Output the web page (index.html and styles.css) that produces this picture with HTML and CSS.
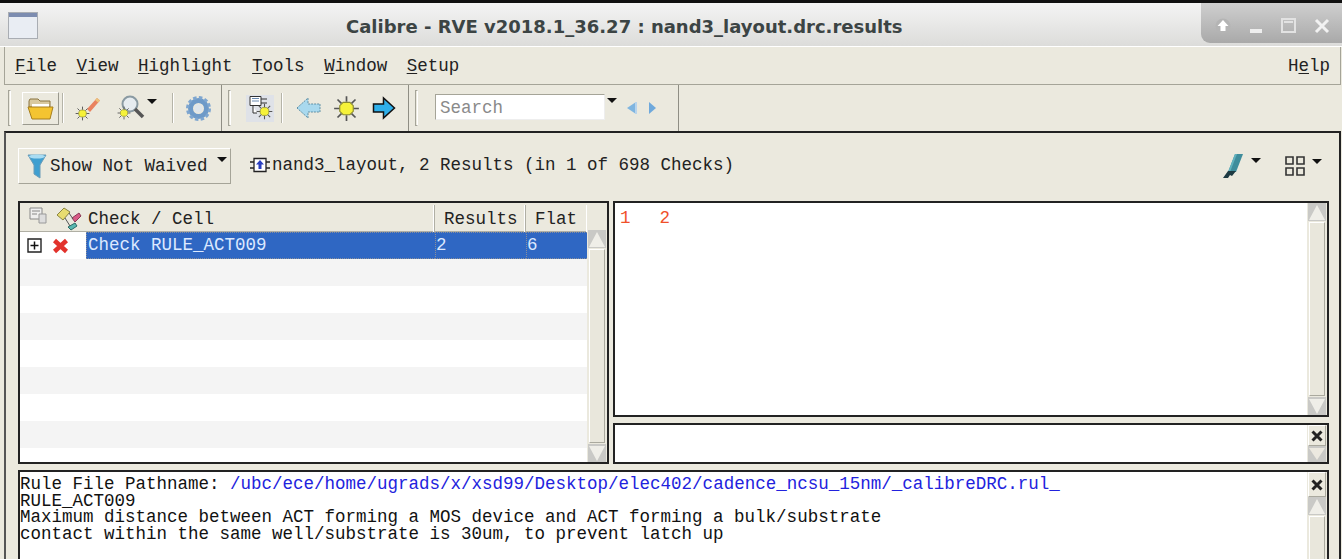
FILE: index.html
```html
<!DOCTYPE html>
<html lang="en">
<head>
    <meta charset="UTF-8">
    <title>Calibre - RVE v2018.1_36.27 : nand3_layout.drc.results</title>
    <link rel="stylesheet" href="styles.css">
</head>
<body>
    <svg class="defs" width="0" height="0">
        <symbol id="spark" viewBox="0 0 24 24">
            <path d="M12 1v5M12 18v5M1 12h5M18 12h5M4 4l3.500 3.500M20 4l-3.500 3.500M4 20l3.500-3.500M20 20l-3.500-3.500" stroke="#555" stroke-width="1.500" fill="none"/>
            <path d="M9 6.500h6l3 3v5l-3 3H9l-3-3v-5z" fill="#f6f23a" stroke="#8a8a30"/>
        </symbol>
        <symbol id="close-x" viewBox="0 0 14 14">
            <path d="M2.500 2.500l9 9M11.500 2.500l-9 9" stroke="#222" stroke-width="3"/>
        </symbol>
    </svg>

    <div class="titlebar">
        <svg class="app-icon" width="30" height="27" viewBox="0 0 30 27">
            <rect x="0.500" y="0.500" width="29" height="26" fill="#e9edf3" stroke="#a9adb3"/>
            <rect x="1" y="1" width="28" height="4" fill="#7c8cb0"/>
        </svg>
        <div class="title">Calibre - RVE v2018.1_36.27 : nand3_layout.drc.results</div>
        <div class="win-buttons">
            <svg width="18" height="18" viewBox="0 0 18 18"><circle cx="9" cy="9" r="7.500" fill="#b4b4b4"/><path d="M9 3l5.500 6h-3v5h-5V9h-3z" fill="#fff"/></svg>
            <svg width="18" height="18" viewBox="0 0 18 18"><rect x="3" y="12" width="12" height="4" fill="#eee"/></svg>
            <svg width="18" height="18" viewBox="0 0 18 18"><rect x="2" y="2" width="13" height="13" fill="none" stroke="#e2e2e2" stroke-width="2"/><rect x="4" y="4" width="9" height="2" fill="#e2e2e2"/></svg>
            <svg width="18" height="18" viewBox="0 0 18 18"><path d="M3 3l12 12M15 3L3 15" stroke="#f2f2f2" stroke-width="3"/></svg>
        </div>
    </div>

    <div class="menubar">
        <span><u>F</u>ile</span>
        <span><u>V</u>iew</span>
        <span><u>H</u>ighlight</span>
        <span><u>T</u>ools</span>
        <span><u>W</u>indow</span>
        <span><u>S</u>etup</span>
        <span class="menu-help">H<u>e</u>lp</span>
    </div>

    <div class="toolbar">
        <div class="tool-group group-file">
            <i class="handle"></i>
            <div class="tool-btn raised">
                <svg width="27" height="25" viewBox="0 0 27 25">
                    <path d="M2 5l1-2h8l2 2h10v6H2z" fill="#d9c9a0" stroke="#8a7440"/>
                    <path d="M5 8h17v3H5z" fill="#fff"/>
                    <path d="M1 11h25l-3 12H5z" fill="#f4c431" stroke="#a87f1c"/>
                </svg>
            </div>
            <i class="sep sep-a"></i>
            <svg class="tool-icon pen-spark" width="26" height="26" viewBox="0 0 26 26">
                <path d="M12 14L22 3l3 2.500L15 17z" fill="#e9825e"/>
                <path d="M20 5l2-2 3 2.500-2 2z" fill="#ecc27c"/>
                <use href="#spark" x="0" y="11" width="15" height="15"/>
            </svg>
            <svg class="tool-icon zoom-spark" width="28" height="26" viewBox="0 0 28 26">
                <circle cx="13" cy="9" r="7.500" fill="#e6ecf0" stroke="#8a9aa2" stroke-width="2"/>
                <path d="M18 14l8 8" stroke="#555" stroke-width="3.500"/>
                <use href="#spark" x="0" y="11" width="14" height="14"/>
            </svg>
            <i class="drop"></i>
            <i class="sep sep-b"></i>
            <svg class="tool-icon gear" width="25" height="25" viewBox="0 0 25 25">
                <circle cx="12.500" cy="12.500" r="8" fill="none" stroke="#6e9ac8" stroke-width="5"/>
                <circle cx="12.500" cy="12.500" r="11" fill="none" stroke="#7ea6d0" stroke-width="3" stroke-dasharray="3.500 2.260"/>
                <circle cx="12.500" cy="12.500" r="4" fill="#dfe6ec"/>
            </svg>
        </div>
        <div class="tool-group group-nav">
            <i class="handle"></i>
            <div class="tool-btn pressed">
                <svg width="27" height="26" viewBox="0 0 27 26">
                    <path d="M3 1.500h11v9H3zM14 4h6M14 8h6M6 10.500V18h4" fill="#fff" stroke="#333"/>
                    <path d="M5 3.500h7M5 6h7" stroke="#6a8ab0"/>
                    <use href="#spark" x="9" y="8" width="17" height="17"/>
                </svg>
            </div>
            <i class="sep sep-c"></i>
            <svg class="tool-icon arrow-prev" width="25" height="24" viewBox="0 0 25 24">
                <path d="M1 12L12 2v6h12v8H12v6z" fill="#a9d9ee" stroke="#5f8fa5" stroke-dasharray="2 1"/>
            </svg>
            <svg class="tool-icon sun" width="27" height="27" viewBox="0 0 24 24"><use href="#spark"/></svg>
            <svg class="tool-icon arrow-next" width="24" height="24" viewBox="0 0 23 24">
                <path d="M22 12L11 2v6H1v8h10v6z" fill="#2fb0ea" stroke="#111" stroke-width="1.500"/>
            </svg>
        </div>
        <div class="tool-group group-search">
            <i class="handle"></i>
            <div class="search-box">Search</div>
            <i class="drop drop-search"></i>
            <svg class="tool-icon prev-small" width="11" height="14" viewBox="0 0 11 14"><path d="M10 1v12L1 7z" fill="#7fb5e0"/><path d="M10 1v12" stroke="#b8d4ec" stroke-width="2"/></svg>
            <svg class="tool-icon next-small" width="9" height="14" viewBox="0 0 9 14"><path d="M1 1v12l7-6z" fill="#6fa9dc"/></svg>
        </div>
    </div>

    <div class="main">
        <div class="filter-bar">
            <div class="filter-btn">
                <svg width="20" height="26" viewBox="0 0 20 26">
                    <path d="M1 2h18l-6 10v13l-6-4V12z" fill="#3f9fd0" stroke="#6a9cb8"/>
                    <ellipse cx="10" cy="3.500" rx="8" ry="2" fill="#a9dcf2"/>
                </svg>
                <span>Show Not Waived</span>
                <i class="drop drop-filter"></i>
            </div>
            <svg class="cell-icon" width="20" height="18" viewBox="0 0 20 18">
                <path d="M4 2.500h12v13H4zM0 6h4M0 12h4M16 6h4M16 12h4" fill="#fff" stroke="#222" stroke-width="1.300"/>
                <path d="M10 4l4 4.500h-2.500V13h-3V8.500H6z" fill="#2a3fc0"/>
            </svg>
            <span class="summary">nand3_layout, 2 Results (in 1 of 698 Checks)</span>
            <svg class="pen-icon" width="20" height="24" viewBox="0 0 20 24">
                <path d="M12 0h8l-7 18H5z" fill="#3f8d9c"/>
                <path d="M12 0h2L7 18H5z" fill="#62b2be"/>
                <path d="M5 17l-5 7h5l2-3 2 1 4-5z" fill="#1d3a42"/>
            </svg>
            <i class="drop drop-pen"></i>
            <svg class="grid-icon" width="20" height="20" viewBox="0 0 20 20">
                <path d="M1 1h7v7H1zM12 1h7v7h-7zM1 12h7v7H1zM12 12h7v7h-7z" fill="none" stroke="#333" stroke-width="1.600"/>
            </svg>
            <i class="drop drop-grid"></i>
        </div>

        <div class="panes">
            <div class="pane check-pane">
                <div class="check-table">
                    <div class="check-row check-head">
                        <div class="head-cell head-first">
                            <svg class="head-a" width="20" height="18" viewBox="0 0 20 18">
                                <path d="M1 1h12v11H1z" fill="#eee" stroke="#888"/>
                                <path d="M3 4h8M3 7h5" stroke="#888"/>
                                <path d="M10 7h7v9h-7z" fill="#ddd" stroke="#999"/>
                            </svg>
                            <svg class="head-b" width="26" height="24" viewBox="0 0 26 24">
                                <path d="M1 8l7-7 6 4-7 8z" fill="#e8dc70" stroke="#8a8440"/>
                                <path d="M16 11l7-5 2 3-6 6z" fill="#d85a86" stroke="#8a3a56"/>
                                <path d="M12 20l7-4 2 3-6 4z" fill="#58b8b0" stroke="#2a6a66"/>
                                <path d="M9 11l5 8M13 6l4 6" stroke="#555" fill="none"/>
                            </svg>
                            <span>Check / Cell</span>
                        </div>
                        <div class="head-cell head-results">Results</div>
                        <div class="head-cell head-flat">Flat</div>
                    </div>
                    <div class="check-row row-selected">
                        <div class="tree-cell">
                            <svg width="15" height="15" viewBox="0 0 15 15"><path d="M1 1h13v13H1z" fill="#fff" stroke="#222" stroke-width="1.400"/><path d="M3.500 7.500h8M7.500 3.500v8" stroke="#111" stroke-width="1.500"/></svg>
                            <svg class="red-x" width="17" height="16" viewBox="0 0 17 16"><path d="M2.500 2.500l12 11M14.500 2.500l-12 11" stroke="#e2322c" stroke-width="4.500"/></svg>
                        </div>
                        <div class="sel-cell sel-name">Check RULE_ACT009</div>
                        <div class="sel-cell">2</div>
                        <div class="sel-cell">6</div>
                    </div>
                    <div class="stripe"></div>
                    <div class="plain"></div>
                    <div class="stripe"></div>
                    <div class="plain"></div>
                    <div class="stripe"></div>
                    <div class="plain"></div>
                    <div class="stripe"></div>
                </div>
                <div class="scrollbar scroll-left">
                    <div class="scroll-btn"><i class="tri-up"></i></div>
                    <div class="thumb"></div>
                    <div class="scroll-btn"><i class="tri-down"></i></div>
                </div>
            </div>

            <div class="pane results-pane">
                <div class="numbers"><span>1</span><span>2</span></div>
                <div class="scrollbar">
                    <div class="scroll-btn"><i class="tri-up"></i></div>
                    <div class="thumb"></div>
                    <div class="scroll-btn"><i class="tri-down"></i></div>
                </div>
            </div>

            <div class="pane small-pane">
                <div class="small-body"></div>
                <div class="scrollbar">
                    <div class="close-btn"><svg width="14" height="14"><use href="#close-x"/></svg></div>
                    <div class="scroll-btn btn-fill"><i class="tri-faint"></i></div>
                </div>
            </div>

            <div class="pane info-pane">
                <div class="info-text">
                    <div>Rule File Pathname: <span class="path">/ubc/ece/home/ugrads/x/xsd99/Desktop/elec402/cadence_ncsu_15nm/_calibreDRC.rul_</span></div>
                    <div>RULE_ACT009</div>
                    <div>Maximum distance between ACT forming a MOS device and ACT forming a bulk/substrate</div>
                    <div>contact within the same well/substrate is 30um, to prevent latch up</div>
                </div>
                <div class="scrollbar">
                    <div class="close-btn close-tall"><svg width="14" height="14"><use href="#close-x"/></svg></div>
                    <div class="scroll-btn"><i class="tri-up"></i></div>
                    <div class="thumb"></div>
                </div>
            </div>
        </div>
    </div>
</body>
</html>
```

FILE: styles.css
```css
* {
    box-sizing: border-box;
}
html, body {
    height: 559px;
    overflow: hidden;
}
body {
    margin: 0;
    background-color: #ebe9de;
    color: #222;
    font-family: "Liberation Mono", monospace;
    font-size: 17.5px;
    border-top: 3px solid #111;
}
i {
    display: block;
    font-style: normal;
}
svg {
    display: block;
    flex: none;
}
.defs {
    position: absolute;
}

/* title bar */
.titlebar {
    height: 44px;
    display: flex;
    align-items: center;
    background: linear-gradient(#f4f4f4, #dcdcda);
    border-bottom: 1px solid #fff;
    padding-left: 8px;
}
.app-icon {
    margin-top: 1px;
}
.title {
    margin-left: 308px;
    width: 558px;
    margin-top: 4px;
    font-family: "DejaVu Sans", sans-serif;
    font-weight: bold;
    font-size: 18px;
    color: #3c4444;
    white-space: nowrap;
}
.win-buttons {
    margin-left: auto;
    align-self: flex-start;
    width: 141px;
    height: 40px;
    display: flex;
    align-items: center;
    justify-content: space-between;
    padding: 5px 11px 0 13px;
    background: linear-gradient(#cfcfcf, #a9a9a9);
    border-radius: 0 0 0 9px;
}

/* menu */
.menubar {
    margin: 0 1px 0 4px;
    height: 38px;
    display: flex;
    align-items: center;
    gap: 19.5px;
    padding: 0 10px 0 10px;
    border: 1px solid #a5a498;
    border-top: none;
    white-space: pre;
}
.menubar u {
    text-underline-offset: 2px;
}
.menu-help {
    margin-left: auto;
}

/* toolbar */
.toolbar {
    height: 46px;
    display: flex;
    padding-left: 8px;
}
.tool-group {
    display: flex;
    align-items: center;
    border-right: 1px solid #8f8e84;
    margin-right: 3px;
}
.group-file {
    width: 214px;
}
.group-nav {
    width: 184px;
}
.group-search {
    width: 267px;
}
.handle {
    width: 3px;
    height: 36px;
    margin-right: 11px;
    border: 1px solid #a5a498;
    border-right-color: #fff;
    flex: none;
}
.group-nav .handle {
    margin-left: 3px;
    margin-right: 15px;
}
.group-search .handle {
    margin-left: 3px;
    margin-right: 17px;
}
.tool-btn {
    display: flex;
    align-items: center;
    justify-content: center;
    flex: none;
}
.raised {
    width: 37px;
    height: 33px;
    border: 1px solid #fff;
    border-right-color: #9a998e;
    border-bottom-color: #9a998e;
}
.pressed {
    width: 28px;
    height: 27px;
    background-color: #dfe2e8;
}
.sep {
    width: 2px;
    height: 30px;
    background-color: #b5b4a8;
    border-right: 1px solid #fff;
    flex: none;
}
.sep-a {
    margin-left: 3px;
}
.pen-spark {
    margin-left: 11px;
}
.zoom-spark {
    margin-left: 16px;
}
.drop {
    width: 0;
    height: 0;
    border-left: 5.500px solid transparent;
    border-right: 5.500px solid transparent;
    border-top: 5.500px solid #111;
    flex: none;
}
.group-file .drop {
    margin: -14px 0 0 2px;
}
.sep-b {
    margin-left: 15px;
}
.gear {
    margin-left: 12px;
}
.sep-c {
    margin-left: 7px;
}
.arrow-prev {
    margin-left: 13px;
}
.sun {
    margin-left: 12px;
}
.arrow-next {
    margin-left: 12px;
}
.search-box {
    width: 170px;
    height: 26px;
    background-color: #fff;
    border: 1px solid #a5a498;
    border-right-color: #eee;
    border-bottom-color: #eee;
    color: #8a8a8a;
    line-height: 26px;
    padding-left: 4px;
    margin-top: -2px;
    flex: none;
}
.drop-search {
    margin: -16px 0 0 2px;
}
.prev-small {
    margin-left: 9px;
}
.next-small {
    margin-left: 11px;
}

/* main area */
.main {
    margin: 0 1px 0 4px;
    height: 440px;
    border: 2px solid #222;
    border-left-color: #555;
    border-bottom: none;
    padding: 0 10px 0 12px;
}
.filter-bar {
    height: 68px;
    display: flex;
    align-items: center;
    white-space: pre;
}
.filter-btn {
    width: 213px;
    height: 36px;
    display: flex;
    align-items: center;
    border: 1px solid #fff;
    border-right-color: #a5a498;
    border-bottom-color: #a5a498;
    padding-left: 8px;
    flex: none;
    margin-top: -3px;
}
.filter-btn span {
    margin-left: 3px;
}
.drop-filter {
    margin: -12px 0 0 9px;
}
.cell-icon {
    margin-left: 19px;
    margin-top: -4px;
}
.summary {
    margin-left: 2px;
    margin-top: -5px;
}
.pen-icon {
    margin-left: auto;
    margin-top: -3px;
}
.drop-pen {
    margin: -14px 0 0 8px;
}
.grid-icon {
    margin-left: 24px;
    margin-top: -2px;
}
.drop-grid {
    margin: -12px 7px 0 7px;
}

.panes {
    display: grid;
    grid-template-columns: 591px 716px;
    grid-template-rows: 216px 41px 100px;
    column-gap: 4px;
    row-gap: 6px;
}
.pane {
    border: 2px solid #222;
    display: flex;
    overflow: hidden;
}
.check-pane {
    grid-row: 1 / 3;
    background-color: #fff;
}
.info-pane {
    grid-column: 1 / 3;
    background-color: #fff;
}

/* check table */
.check-table {
    flex: 1;
    padding-top: 2px;
    background: linear-gradient(#ebe9de 4px, #fff 4px);
}
.check-row {
    display: grid;
    grid-template-columns: 66px 349px 91px 61px;
    height: 27px;
}
.check-head {
    background-color: #ebe9de;
    border-bottom: 1px solid #b0afa4;
}
.head-cell {
    display: flex;
    align-items: center;
    line-height: 25px;
    padding-top: 2px;
    border-right: 1px solid #b0afa4;
    box-shadow: inset -1px 0 0 #fff;
    white-space: pre;
}
.head-first {
    grid-column: 1 / 3;
}
.head-a {
    margin-left: 9px;
    margin-top: -8px;
}
.head-b {
    margin-left: 7px;
    margin-top: -1px;
}
.head-first span {
    margin-left: 6px;
}
.head-results {
    padding-left: 9px;
}
.head-flat {
    padding-left: 9px;
    border-right: none;
}
.tree-cell {
    display: flex;
    align-items: center;
    padding-left: 7px;
}
.red-x {
    margin-left: 10px;
}
.sel-cell {
    background-color: #2f67c3;
    color: #dce9ff;
    line-height: 25px;
    border-top: 1px dotted #8a8f9a;
    border-bottom: 1px dotted #8a8f9a;
    border-left: 1px dotted #8a8f9a;
    white-space: pre;
}
.sel-name {
    padding-left: 1px;
}
.stripe,
.plain {
    height: 27px;
}
.stripe {
    background-color: #f4f4f4;
    width: 567px;
}

/* scrollbars */
.scrollbar {
    width: 20px;
    flex: none;
    display: flex;
    flex-direction: column;
    background-color: #ebe9de;
    padding: 0 1px;
}
.scroll-left {
    padding-top: 27px;
}
.scroll-btn {
    height: 18px;
    background-color: #c9c9c6;
    display: flex;
    align-items: center;
    justify-content: center;
    flex: none;
}
.thumb {
    flex: 1;
    margin: 1px 1px;
    background-color: #e9e7dc;
    border: 1px solid #fff;
    border-right-color: #aaa99e;
    border-bottom-color: #aaa99e;
}
.tri-up,
.tri-down,
.tri-faint {
    width: 0;
    height: 0;
    border-left: 8px solid transparent;
    border-right: 8px solid transparent;
}
.tri-up {
    border-bottom: 15px solid #efeee8;
}
.tri-down {
    border-top: 15px solid #efeee8;
}
.tri-faint {
    border-top: 12px solid #ece9e0;
}
.close-btn {
    height: 21px;
    display: flex;
    align-items: center;
    justify-content: center;
    border: 1px solid #fff;
    border-right-color: #aaa99e;
    border-bottom-color: #aaa99e;
    flex: none;
}
.close-tall {
    height: 25px;
}
.btn-fill {
    flex: 1;
    height: auto;
}

/* result panes */
.numbers {
    flex: 1;
    background-color: #fff;
    color: #f0502a;
    padding: 3px 0 0 5px;
    display: flex;
    gap: 29px;
    line-height: 25px;
}
.small-body {
    flex: 1;
    background-color: #fff;
}
.info-text {
    flex: 1;
    padding-top: 4px;
    line-height: 16.600px;
    color: #111;
}
.info-text div {
    white-space: pre;
}
.path {
    color: #2222dd;
}
```
